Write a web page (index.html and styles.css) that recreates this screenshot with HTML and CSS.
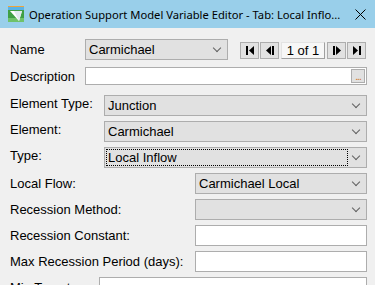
FILE: index.html
```html
<!DOCTYPE html>
<html lang="en">
<head>
  <meta charset="UTF-8" />
  <title>Operation Support Model Variable Editor</title>
  <link rel="stylesheet" href="styles.css">
</head>
<body>
  <div class="titlebar">
    <svg class="app-icon" width="16" height="16" viewBox="0 0 16 16">
      <rect x="0" y="0" width="16" height="16" fill="#3f9f45"/>
      <rect x="0" y="0" width="16" height="4" fill="#5ab4e6"/>
      <rect x="0" y="0" width="16" height="1" fill="#f0a43c"/>
      <rect x="0" y="12" width="16" height="4" fill="#6fc26a"/>
      <polygon points="2,5 14,5 11,15" fill="#ffffff"/>
      <polygon points="6,5 14,5 11,15" fill="#dfe8ef"/>
    </svg>
    <span class="title">Operation Support Model Variable Editor - Tab: Local Inflo...</span>
    <svg class="close" width="11" height="11" viewBox="0 0 11 11">
      <path d="M0.5 0.5 L10.5 10.5 M10.5 0.5 L0.5 10.5" stroke="#000" stroke-width="1"/>
    </svg>
  </div>

  <div class="form">
    <div class="row row-name">
      <label class="label">Name</label>
      <div class="combo name-combo">
        <span class="value">Carmichael</span>
        <span class="chev"></span>
      </div>
      <div class="nav">
        <button class="nav-btn">
          <svg width="8" height="9" viewBox="0 0 8 9"><rect x="0" y="0" width="2" height="9"/><polygon points="8,0 8,9 3,4.5"/></svg>
        </button>
        <button class="nav-btn">
          <svg width="8" height="9" viewBox="0 0 8 9"><rect x="6" y="0" width="2" height="9"/><polygon points="5,0 5,9 0,4.5"/></svg>
        </button>
        <div class="counter">1 of 1</div>
        <button class="nav-btn">
          <svg width="8" height="9" viewBox="0 0 8 9"><rect x="0" y="0" width="2" height="9"/><polygon points="3,0 3,9 8,4.5"/></svg>
        </button>
        <button class="nav-btn">
          <svg width="8" height="9" viewBox="0 0 8 9"><rect x="6" y="0" width="2" height="9"/><polygon points="0,0 0,9 5,4.5"/></svg>
        </button>
      </div>
    </div>

    <div class="row row-desc">
      <label class="label">Description</label>
      <div class="textbox desc-box">
        <span class="dots">...</span>
      </div>
    </div>

    <div class="row row-element up">
      <label class="label">Element Type:</label>
      <div class="combo"><span class="value">Junction</span><span class="chev"></span></div>
    </div>

    <div class="row row-element up">
      <label class="label">Element:</label>
      <div class="combo"><span class="value">Carmichael</span><span class="chev"></span></div>
    </div>

    <div class="row row-element up">
      <label class="label">Type:</label>
      <div class="combo focused"><span class="value">Local Inflow</span><span class="chev"></span></div>
    </div>

    <div class="row row-param">
      <label class="label">Local Flow:</label>
      <div class="combo"><span class="value">Carmichael Local</span><span class="chev"></span></div>
    </div>

    <div class="row row-param">
      <label class="label">Recession Method:</label>
      <div class="combo"><span class="value"></span><span class="chev"></span></div>
    </div>

    <div class="row row-param">
      <label class="label">Recession Constant:</label>
      <div class="textbox"></div>
    </div>

    <div class="row row-param">
      <label class="label">Max Recession Period (days):</label>
      <div class="textbox"></div>
    </div>

    <div class="row row-target">
      <label class="label">Min Target:</label>
      <div class="textbox"></div>
    </div>
  </div>
</body>
</html>
```

FILE: styles.css
```css
html, body {
  margin: 0;
  height: 285px;
  overflow: hidden;
}

body {
  background: #f0f0f0;
  font-family: 'Liberation Sans', Arial, sans-serif;
  font-size: 13px;
  color: #000;
}

.titlebar {
  height: 28px;
  background: #99cfea;
  display: flex;
  align-items: center;
  padding-left: 8px;
}

.app-icon {
  flex: none;
}

.title {
  margin-left: 5px;
  font-family: 'Noto Sans', sans-serif;
  font-size: 11.2px;
  flex: 1;
  white-space: nowrap;
}

.close {
  margin-right: 9px;
  flex: none;
}

.form {
  padding: 11px 8px 0 10px;
}

.row {
  display: flex;
  align-items: center;
  height: 21px;
  margin-bottom: 5px;
}

.row.up .label {
  padding-bottom: 5px;
}

.label {
  flex: none;
  white-space: nowrap;
}

.row-name .label,
.row-desc .label {
  width: 75px;
}

.row-element .label {
  width: 94px;
}

.row-param .label {
  width: 185px;
}

.row-target .label {
  width: 89px;
}

.row-name {
  margin-bottom: 7px;
}

.row-desc {
  height: 18px;
  margin-bottom: 10px;
}

.combo {
  flex: 1;
  height: 21px;
  box-sizing: border-box;
  border: 1px solid #adadad;
  background: #e1e1e1;
  display: flex;
  align-items: center;
  position: relative;
}

.combo .value {
  flex: 1;
  padding-left: 3px;
  white-space: nowrap;
}

.combo.focused .value {
  margin: 0 19px 0 2px;
  padding-left: 1px;
  height: 15px;
  line-height: 15px;
  outline: 1px dotted #000;
  outline-offset: 0;
}

.chev {
  flex: none;
  width: 5px;
  height: 5px;
  margin: 0 7px 3px 0;
  border-right: 1px solid #606060;
  border-bottom: 1px solid #606060;
  transform: rotate(45deg);
}

.combo.focused .chev {
  position: absolute;
  right: 0;
}

.name-combo {
  flex: none;
  width: 143px;
}

.nav {
  display: flex;
  margin-left: 12px;
  gap: 1px;
  height: 17px;
  margin-top: 2px;
}

.nav-btn {
  width: 19px;
  height: 17px;
  padding: 0;
  border: 1px solid #adadad;
  background: #e1e1e1;
  display: flex;
  align-items: center;
  justify-content: center;
}

.nav-btn svg {
  fill: #000;
}

.counter {
  width: 44px;
  height: 17px;
  box-sizing: border-box;
  background: #f7f7f7;
  border: 1px solid #e3e3e3;
  border-right-color: #a0a0a0;
  border-bottom-color: #a0a0a0;
  text-align: center;
  line-height: 15px;
  margin: 0 1px;
}

.textbox {
  flex: 1;
  height: 21px;
  box-sizing: border-box;
  border: 1px solid #adadad;
  background: #fff;
}

.desc-box {
  height: 18px;
  display: flex;
  justify-content: flex-end;
  padding: 1px;
}

.dots {
  width: 14px;
  height: 14px;
  box-sizing: border-box;
  background: #e1e1e1;
  border: 1px solid #adadad;
  color: #d07020;
  font-size: 10px;
  line-height: 14px;
  text-align: center;
  letter-spacing: -1px;
}
```
